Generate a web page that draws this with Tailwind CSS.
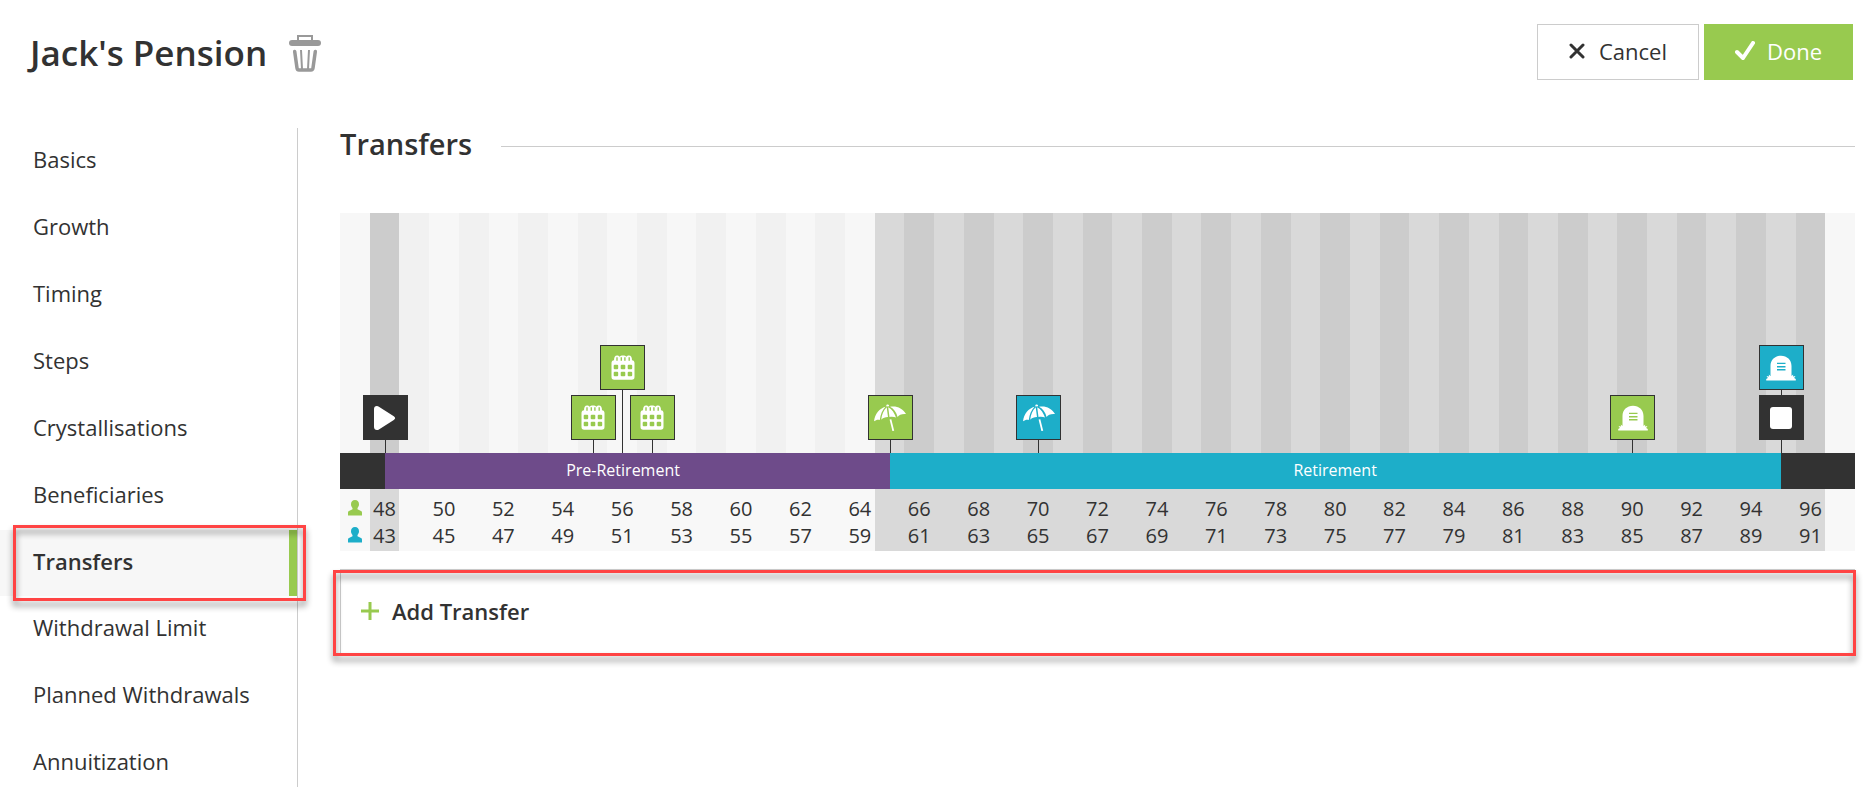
<!DOCTYPE html>
<html lang="en">
<head>
  <meta charset="UTF-8">
  <meta name="viewport" content="width=device-width, initial-scale=1.0">
  <title>Jack's Pension</title>
  <script src="https://cdn.jsdelivr.net/npm/@tailwindcss/browser@4"></script>
</head>
<body class="h-screen overflow-hidden flex flex-col bg-white text-[#323232] font-['Open_Sans',sans-serif]">

  <!-- Icon set -->
  <svg class="hidden">
    <symbol id="gift" viewBox="0 0 24 25">
      <path fill="currentColor" fill-rule="evenodd" d="M3 5.200C3 2.300 4 .5 6 .5c1.200 0 2 .5 2.500 1.200C9.200.9 10.500.5 12 .5s2.800.4 3.500 1.200C16 1 16.800.5 18 .5c2 0 3 1.800 3 4.700 1.600.2 2.500 1 2.500 2.800v14c0 1.800-.9 2.700-2.700 2.700H3.200C1.400 24.700.5 23.800.5 22V8c0-1.800.9-2.600 2.500-2.800zM5.300 2.200v3.600h1.400V2.200zm4.300 0v3.600H11V2.200zm3.600 0v3.600h1.400V2.200zm4.300 0v3.600h1.400V2.200z
        M3.700 9.700q-1 0-1 1v2.500q0 1 1 1h2.500q1 0 1-1v-2.500q0-1-1-1zm7 0q-1 0-1 1v2.500q0 1 1 1h2.600q1 0 1-1v-2.500q0-1-1-1zm7 0q-1 0-1 1v2.500q0 1 1 1h2.500q1 0 1-1v-2.500q0-1-1-1z
        M3.700 16.800q-1 0-1 1v2.500q0 1 1 1h2.500q1 0 1-1v-2.500q0-1-1-1zm7 0q-1 0-1 1v2.500q0 1 1 1h2.600q1 0 1-1v-2.500q0-1-1-1zm7 0q-1 0-1 1v2.500q0 1 1 1h2.500q1 0 1-1v-2.500q0-1-1-1z"/>
    </symbol>
    <symbol id="umbrella" viewBox="0 0 32 28">
      <g fill="currentColor">
        <path d="M12.300 1.600a1.400 1.200 0 0 1 2.700-.4l.1 1-2.700.3z"/>
        <path d="M11.500 2.800C5.500 4.600 1 9.500 0 17.300c2-1.500 4-2 5.800-1.300C6.500 10.500 8.200 6 11.500 2.800z"/>
        <path d="M12.700 3.200C9.500 6.300 7.800 10.700 7.200 15.700c1.600-1.700 4-2.700 6.800-2.700z"/>
        <path d="M14.200 3.200 15.500 13c2.400-.7 4.700-.3 6.500.6-1.400-4.600-3.900-8.300-7.800-10.400z"/>
        <path d="M16 2.700c4 2.100 6.400 5.800 7.600 10.300 1.300-2.200 4.500-3.400 8.400-3C28.500 4 22.500 1.500 16 2.700z"/>
        <path d="m15.600 15.500 1.700-.2 2.900 11.400-1.800.4z"/>
      </g>
    </symbol>
    <symbol id="tomb" viewBox="0 0 30 26">
      <path fill="currentColor" fill-rule="evenodd" d="M4.500 21V11C4.500 5 9 .8 15 .8S25.500 5 25.500 11v10l1.700-1.500-.2 2 2.500-.5-1.400 2 1.700 1v1.500H.2V24l1.700-1-1.400-2 2.500.5-.2-2zM11 7.700v1.200h8.500V7.700zM11 11v1.600h8.500V11zM11 14v1.600h8.500V14z"/>
    </symbol>
    <symbol id="play" viewBox="0 0 22 26">
      <path fill="currentColor" d="M0 4C0 .8 3 .2 5.300 1.900l14.500 9.300c1.800 1.200 1.800 2.600 0 3.800L5.300 24.200C3 25.800 0 25.200 0 22z"/>
    </symbol>
    <symbol id="stop" viewBox="0 0 22 22">
      <rect width="22" height="22" rx="3" fill="currentColor"/>
    </symbol>
    <symbol id="person" viewBox="0 0 14 16">
      <path fill="currentColor" d="M7 0c2.600 0 4 1.800 4 4.300 0 1.600-.7 2.800-1.500 3.700v1.200L13 11c.8.400 1 1 1 2v2.500H0V13c0-1 .2-1.600 1-2l3.500-1.800V8C3.700 7.100 3 5.900 3 4.300 3 1.800 4.400 0 7 0z"/>
    </symbol>
  </svg>

  <header class="flex items-start justify-between pl-[30px] pr-[18px] pt-6 shrink-0">
    <div class="flex items-center gap-[22px] h-[58px] -mb-[2px]">
      <h1 class="text-[35px] leading-[48px] font-semibold">Jack's Pension</h1>
      <button type="button" aria-label="Delete" class="text-[#999999]">
        <svg class="w-8 h-[37px]" viewBox="0 0 32 37" fill="none" stroke="currentColor">
          <path stroke-width="2" d="M9 6V1h14v5"/>
          <rect y="5" width="32" height="6" rx="3" fill="currentColor" stroke="none"/>
          <path stroke-width="3.500" stroke-linecap="round" d="M5.700 16.500 8 33q.3 2 2 2h12q1.700 0 2-2l2.300-16.500"/>
          <path stroke-width="2" d="m12 15 1 19m7-19-1 19"/>
        </svg>
      </button>
    </div>
    <div class="flex gap-[5px]">
      <button type="button" class="h-14 px-[31px] pb-[2px] flex items-center gap-[14px] border border-[#cccccc] text-[22px]">
        <svg class="w-4 h-4" viewBox="0 0 16 16" fill="none" stroke="currentColor" stroke-width="3" stroke-linecap="round"><path d="m2 2 12 12M14 2 2 14"/></svg>
        Cancel
      </button>
      <button type="button" class="h-14 px-[31px] pb-[2px] flex items-center gap-3 bg-[#98ca4f] text-white text-[22px]">
        <svg class="w-5 h-5" viewBox="0 0 20 20" fill="none" stroke="currentColor" stroke-width="4" stroke-linecap="round" stroke-linejoin="round"><path d="m2 11 6 6L18 2"/></svg>
        Done
      </button>
    </div>
  </header>

  <div class="flex flex-1 min-h-0 pt-12">
    <nav class="w-[298px] shrink-0 border-r border-[#cccccc] text-[22px]">
      <a href="#" class="flex items-center h-[67px] pl-[33px] pb-1">Basics</a>
      <a href="#" class="flex items-center h-[67px] pl-[33px] pb-1">Growth</a>
      <a href="#" class="flex items-center h-[67px] pl-[33px] pb-1">Timing</a>
      <a href="#" class="flex items-center h-[67px] pl-[33px] pb-1">Steps</a>
      <a href="#" class="flex items-center h-[67px] pl-[33px] pb-1">Crystallisations</a>
      <a href="#" class="flex items-center h-[67px] pl-[33px] pb-1">Beneficiaries</a>
      <a href="#" class="relative flex items-center h-[66px] pl-[33px] pb-1 bg-[#f7f7f7] border-r-8 border-[#98ca4f] font-semibold">
        Transfers
        <span class="absolute left-[13px] -right-[17px] -top-[5px] -bottom-[5px] border-3 border-[#ff4444] drop-shadow-[0_5px_3px_rgba(0,0,0,0.45)]"></span>
      </a>
      <a href="#" class="flex items-center h-[67px] pl-[33px] pb-1">Withdrawal Limit</a>
      <a href="#" class="flex items-center h-[67px] pl-[33px] pb-1">Planned Withdrawals</a>
      <a href="#" class="flex items-center h-[67px] pl-[33px] pb-1">Annuitization</a>
    </nav>

    <main class="flex-1 min-w-0 pl-[42px] pr-4">
      <div class="flex items-center gap-[29px] h-9">
        <h2 class="text-[29px] leading-8 pb-1 font-semibold">Transfers</h2>
        <div class="flex-1 border-t border-[#cccccc]"></div>
      </div>

      <section class="mt-[49px]">
        <div class="relative h-60">
          <div id="stripes" class="grid grid-cols-51 h-full"></div>
          <div id="markers"></div>
        </div>
        <div class="flex h-9 text-white text-[16px] leading-[34px] text-center">
          <div class="flex-[3] bg-[#323232]"></div>
          <div class="flex-[34] bg-[#6e4b8a]"><span class="pr-7">Pre-Retirement</span></div>
          <div class="flex-[60] bg-[#1daec9]">Retirement</div>
          <div class="flex-[5] bg-[#323232]"></div>
        </div>
        <table class="block text-[20px] leading-[27px]">
          <tbody id="ages" class="block"></tbody>
        </table>
      </section>

      <div class="relative mt-[18px] h-[86px] border border-[#cccccc] flex items-center">
        <button type="button" class="flex items-center gap-[13px] pl-5 pb-[2px] text-[22px] font-semibold">
          <svg class="w-[18px] h-[18px]" viewBox="0 0 18 18" fill="none" stroke="#98ca4f" stroke-width="3"><path d="M9 0v18M0 9h18"/></svg>
          Add Transfer
        </button>
        <span class="absolute -left-2 -right-[2px] top-0 -bottom-[2px] border-3 border-[#ff4444] drop-shadow-[0_5px_3px_rgba(0,0,0,0.45)] pointer-events-none"></span>
      </div>
    </main>
  </div>

  <script>
    const FIRST_AGE = 48, LAST_AGE = 96, COLS = 51, RETIRE_COL = 18;

    // one stripe per year, plus a blank one at each end
    let stripes = '';
    for (let i = 0; i < COLS; i++) {
      let bg = i % 2 === 0 ? 'bg-[#f1f1f1]' : 'bg-[#f7f7f7]';
      if (i === 0 || i === COLS - 1) bg = 'bg-[#f7f7f7]';
      else if (i === 1) bg = 'bg-[#cccccc]';
      else if (i >= RETIRE_COL) bg = i % 2 === 0 ? 'bg-[#d9d9d9]' : 'bg-[#cccccc]';
      stripes += `<div class="${bg}"></div>`;
    }
    document.getElementById('stripes').innerHTML = stripes;

    const people = [
      { name: 'Client', offset: 0, color: 'text-[#98ca4f]', pad: 'pt-[6px] h-[33px]' },
      { name: 'Partner', offset: -5, color: 'text-[#1daec9]', pad: 'h-[29px]' },
    ];
    document.getElementById('ages').innerHTML = people.map(p => {
      let row = `<th aria-label="${p.name}" class="${p.pad} bg-[#f8f8f8] ${p.color}"><svg class="w-[14px] h-4 mx-auto mt-[5px]"><use href="#person"/></svg></th>`;
      for (let i = 1; i < COLS; i++) {
        const age = FIRST_AGE + i - 1;
        const bg = i === 1 || (i >= RETIRE_COL && age <= LAST_AGE) ? 'bg-[#d9d9d9]' : 'bg-[#f8f8f8]';
        row += `<td class="${p.pad} ${bg} text-center">${i % 2 && age <= LAST_AGE ? age + p.offset : ''}</td>`;
      }
      return `<tr class="grid grid-cols-51">${row}</tr>`;
    }).join('');

    const GREEN = 'bg-[#98ca4f]', BLUE = 'bg-[#1daec9]', DARK = 'bg-[#323232]';
    const markers = [
      { age: 48, icon: 'play', size: 'w-[22px] h-[26px]', bg: DARK },
      { age: 55, icon: 'gift', size: 'w-6 h-[25px]', bg: GREEN },
      { age: 56, icon: 'gift', size: 'w-6 h-[25px]', bg: GREEN, high: true },
      { age: 57, icon: 'gift', size: 'w-6 h-[25px]', bg: GREEN },
      { age: 65, icon: 'umbrella', size: 'w-8 h-7', bg: GREEN },
      { age: 70, icon: 'umbrella', size: 'w-8 h-7', bg: BLUE },
      { age: 90, icon: 'tomb', size: 'w-[30px] h-[26px]', bg: GREEN },
      { age: 95, icon: 'tomb', size: 'w-[30px] h-[26px]', bg: BLUE, high: true },
      { age: 95, icon: 'stop', size: 'w-[22px] h-[22px]', bg: DARK },
    ];
    document.getElementById('markers').innerHTML = markers.map(m => {
      const left = (m.age - FIRST_AGE + 1.5) / COLS * 100;
      return `<div class="absolute bottom-0 -ml-[22px] flex flex-col items-center" style="left:${left}%">
        <div class="w-[45px] h-[45px] flex items-center justify-center border border-[#323232] text-white ${m.bg}">
          <svg class="${m.size}"><use href="#${m.icon}"/></svg>
        </div>
        <div class="w-px bg-[#323232] ${m.high ? 'h-[63px]' : 'h-[13px]'}"></div>
      </div>`;
    }).join('');
  </script>
</body>
</html>
